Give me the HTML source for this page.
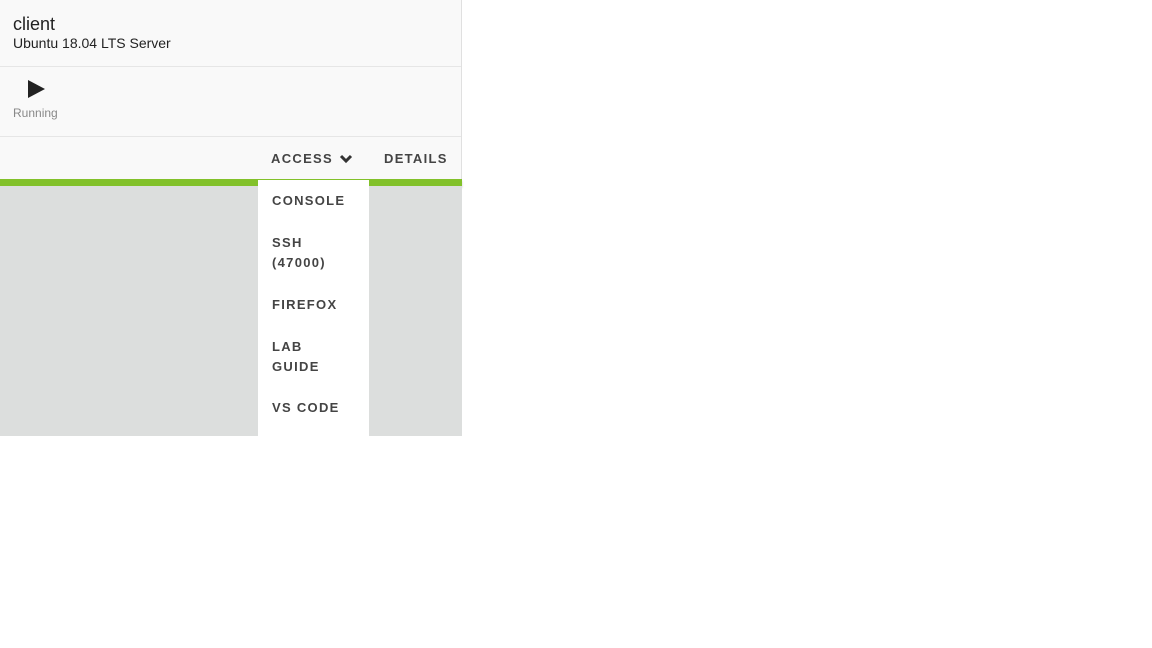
<!DOCTYPE html>
<html><head><style>
*{margin:0;padding:0;box-sizing:border-box}
body{width:1152px;height:648px;background:#fff;font-family:"Liberation Sans",sans-serif;position:relative;overflow:hidden}
.card{position:absolute;left:0;top:0;width:462px;height:180px;background:#f9f9f9;border-right:1px solid #e0e0e0}
.h{position:absolute;left:13px;top:14px}
.t{font-size:18px;color:#222;line-height:20px}
.s{font-size:14px;color:#222;line-height:18px}
.l1{position:absolute;left:0;top:66px;width:461px;height:1px;background:#e6e6e6}
.l2{position:absolute;left:0;top:136px;width:461px;height:1px;background:#e6e6e6}
.run{position:absolute;left:13px;top:105px;font-size:12px;color:#888;line-height:16px}
.btn{position:absolute;top:151px;font-size:13px;font-weight:bold;letter-spacing:1.3px;color:#444}
.green{position:absolute;left:0;top:179px;width:462px;height:7px;background:#82c12a;box-shadow:0 2px 2px rgba(0,0,0,.2)}
.gray{position:absolute;left:0;top:186px;width:462px;height:250px;background:#dcdedd}
.dd{position:absolute;left:258px;top:180px;width:111px;height:256px;background:#fff}
.it{position:absolute;left:14px;font-size:13px;font-weight:bold;letter-spacing:1.3px;color:#444;line-height:20px}
</style></head><body>
<div class="card">
<div class="h"><div class="t">client</div><div class="s">Ubuntu 18.04 LTS Server</div></div>
<div class="l1"></div>
<svg style="position:absolute;left:27px;top:80px" width="19" height="18"><polygon points="1,0 18,9 1,18" fill="#222"/></svg>
<div class="run">Running</div>
<div class="l2"></div>
<div class="btn" style="left:271px">ACCESS</div>
<svg style="position:absolute;left:339px;top:154px" width="14" height="10"><polyline points="2,2 7,7 12,2" fill="none" stroke="#333" stroke-width="3"/></svg>
<div class="btn" style="left:384px">DETAILS</div>
</div>
<div class="green"></div>
<div class="gray"></div>
<div class="dd">
<div class="it" style="top:11px">CONSOLE</div>
<div class="it" style="top:53px">SSH<br>(47000)</div>
<div class="it" style="top:115px">FIREFOX</div>
<div class="it" style="top:157px">LAB<br>GUIDE</div>
<div class="it" style="top:218px">VS CODE</div>
</div>
</body></html>
